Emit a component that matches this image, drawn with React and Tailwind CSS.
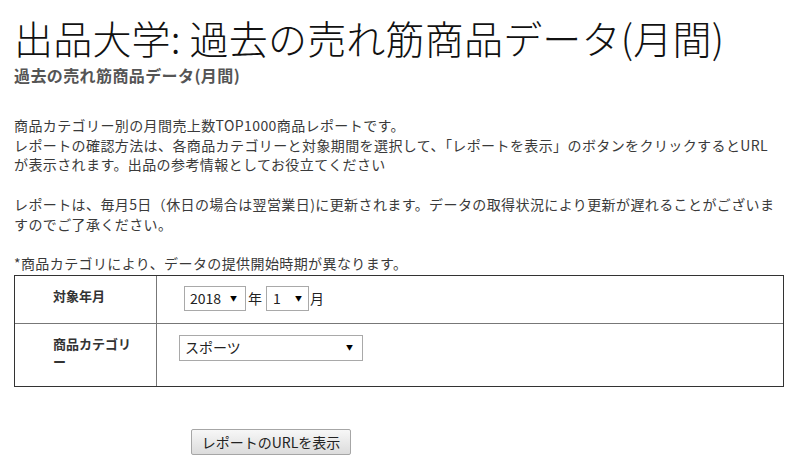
import React from 'react';

const Caret = () => <span className="text-[7px] leading-none text-black">▼</span>;

const FakeSelect = ({ value, className = '' }) => (
  <div
    className={`flex items-center justify-between bg-white border border-[#a9a9a9] text-[14px] text-[#222] ${className}`}
  >
    <span>{value}</span>
    <Caret />
  </div>
);

export default function App() {
  return (
    <div className="min-h-[470px] bg-white px-[14px] pt-[14px] font-['Noto_Sans_CJK_JP','Noto_Sans',sans-serif] text-[#3a3a3a]">
      <h1 className="text-[39px] leading-[46px] text-[#111] font-light tracking-[0.2px]">
        出品大学: 過去の売れ筋商品データ(月間)
      </h1>
      <h2 className="mt-[5px] text-[16px] leading-[20px] font-bold text-[#555] tracking-[0.4px]">
        過去の売れ筋商品データ(月間)
      </h2>

      <div className="mt-[31px] text-[14px] leading-[19.7px] tracking-[0.4px]">
        <p>商品カテゴリー別の月間売上数TOP1000商品レポートです。</p>
        <p>
          レポートの確認方法は、各商品カテゴリーと対象期間を選択して、「レポートを表示」のボタンをクリックするとURL
          <br />
          が表示されます。出品の参考情報としてお役立てください
        </p>
        <p className="mt-[19.7px]">
          レポートは、毎月5日（休日の場合は翌営業日)に更新されます。データの取得状況により更新が遅れることがございま
          <br />
          すのでご了承ください。
        </p>
        <p className="mt-[19.7px]">*商品カテゴリにより、データの提供開始時期が異なります。</p>
      </div>

      <div className="mt-[1px] w-[770px] border border-[#333]">
        <div className="flex h-[48px] border-b border-[#777]">
          <div className="w-[142px] shrink-0 border-r border-[#777] pl-[38px] pr-[18px] pt-[11px] text-[13px] leading-[18px] font-bold text-[#333]">
            対象年月
          </div>
          <div className="flex items-start pl-[27px] pt-[10px] text-[14px] text-[#222]">
            <FakeSelect value="2018" className="w-[62px] h-[25px] pl-[5px] pr-[8px]" />
            <span className="ml-[2px] leading-[25px]">年</span>
            <FakeSelect value="1" className="ml-[4px] w-[43px] h-[25px] pl-[6px] pr-[6px]" />
            <span className="ml-[1px] leading-[25px]">月</span>
          </div>
        </div>
        <div className="flex h-[62px]">
          <div className="w-[142px] shrink-0 border-r border-[#777] pl-[38px] pr-[18px] pt-[11px] text-[13px] leading-[18px] font-bold text-[#333]">
            商品カテゴリー
          </div>
          <div className="pl-[22px] pt-[11px]">
            <FakeSelect value="スポーツ" className="w-[184px] h-[26px] pl-[5px] pr-[9px]" />
          </div>
        </div>
      </div>

      <div className="mt-[42px] pl-[177px]">
        <button className="h-[26px] w-[160px] border border-[#a6a6a6] rounded-[2px] bg-gradient-to-b from-[#f7f7f7] to-[#dcdcdc] text-[14px] text-[#222] leading-[24px]">
          レポートのURLを表示
        </button>
      </div>
    </div>
  );
}
